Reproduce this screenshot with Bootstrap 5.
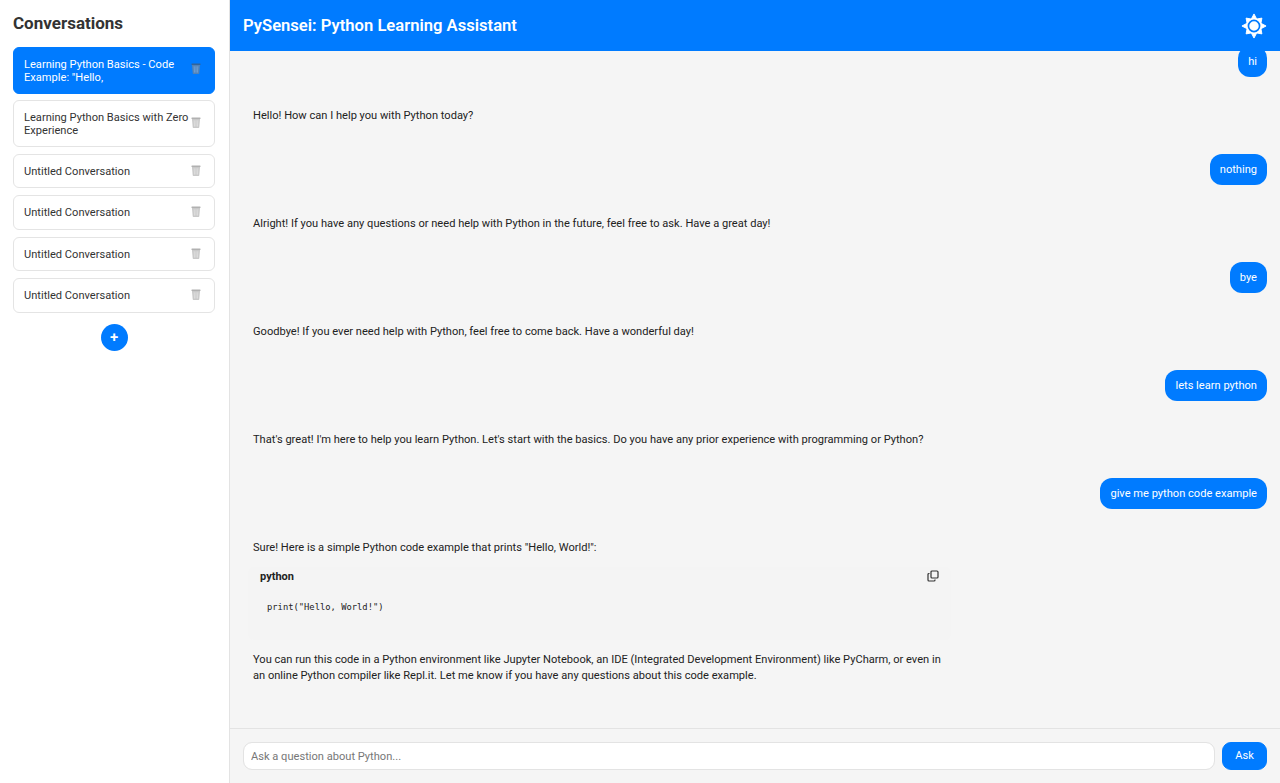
<!DOCTYPE html>
<html lang="en">
<head>
  <meta charset="UTF-8">
  <meta name="viewport" content="width=device-width, initial-scale=1">
  <title>PySensei: Python Learning Assistant</title>
  <link href="https://cdn.jsdelivr.net/npm/bootstrap@5.3.0/dist/css/bootstrap.min.css" rel="stylesheet">
  <style>
    body { font-family: Roboto, "Liberation Sans", sans-serif; font-size: 11.1px; line-height: 16px; color: #222; background: #f5f5f5; overflow: hidden; }
    .side-panel { width: 230px; background: #fff; border-right: 1px solid #e3e3e3; padding: 13px 14px 13px 13px; }
    .side-title { font-size: 17px; line-height: 20px; font-weight: 700; color: #333; margin: 0 0 14px; }
    .convo-list { gap: 6.9px; }
    .convo-item { border: 1px solid #e4e4e4; border-radius: 6px; background: #fff; padding: 9px 10px; min-height: 34.6px; line-height: 13px; color: #333; }
    .convo-item span { padding-top: .5px; }
    .convo-item.active-convo { background: #007bff; border-color: #007bff; color: #fff; }
    .trash-icon { width: 10px; height: 11px; flex: none; margin: 0 3px 2px 2px; opacity: .45; }
    .active-convo .trash-icon { opacity: .6; margin-bottom: 4px; }
    .add-btn { width: 27px; height: 27px; background: #007bff; color: #fff; border: 0; padding: 0; margin-top: 11px; font-size: 15px; font-weight: 600; line-height: 27px; }
    .top-bar { height: 51px; background: #007bff; color: #fff; padding: 0 13px; z-index: 2; flex: none; }
    .top-title { font-size: 16.6px; font-weight: 600; margin: 0; }
    .chat-scroll { min-height: 0; overflow: hidden; padding: 0 13px 44.5px; }
    .user-msg { background: #007bff; color: #fff; border-radius: 12px; padding: 8.5px 10px 6.5px; }
    .bot-msg { padding: 0 324px 0 10px; margin: 31px 0 30px; }
    .bot-msg p { margin: 0; }
    .code-wrap { background: #f4f4f4; margin: 11px -8px 12px -5px; padding: 2px 12px 25px; border-radius: 6px; }
    .code-lang { font-weight: 700; font-size: 11px; }
    .copy-icon { margin-bottom: 2px; }
    .code-line { font-family: "DejaVu Sans Mono", monospace; font-size: 8.8px; margin: 14px 0 0 7px; color: #222; }
    .input-bar { border-top: 1px solid #e3e3e3; padding: 13px; gap: 7px; flex: none; }
    .ask-input { font-size: 11.1px; height: 28px; border-radius: 9px; border-color: #e3e3e3; padding: 0 7px; color: #222; }
    .ask-input::placeholder { color: #777; }
    .ask-btn { background: #007bff; border-color: #007bff; font-size: 11.1px; height: 28px; width: 45px; border-radius: 9px; padding: 0; line-height: 26px; }
  </style>
</head>
<body>

<div class="d-flex vh-100">
  <!-- Sidebar -->
  <aside class="side-panel d-flex flex-column flex-shrink-0">
    <h2 class="side-title">Conversations</h2>
    <div id="convoList" class="convo-list d-flex flex-column"></div>
    <button class="add-btn rounded-circle align-self-center">+</button>
  </aside>

  <!-- Main -->
  <main class="d-flex flex-column flex-grow-1" style="min-width:0">
    <header class="top-bar d-flex align-items-center justify-content-between">
      <h1 class="top-title">PySensei: Python Learning Assistant</h1>
      <svg width="26" height="26" viewBox="0 0 28 28">
        <polygon fill="#fff" stroke="#fff" stroke-width="1" stroke-linejoin="round" points="14,1 16.9,6.5 22.5,5.5 21.5,11.1 27,14 21.5,16.9 22.5,22.5 16.9,21.5 14,27 11.1,21.5 5.5,22.5 6.5,16.9 1,14 6.5,11.1 5.5,5.5 11.1,6.5"/>
        <circle cx="14" cy="14" r="6" fill="#fff" stroke="#007bff" stroke-width="1.8"/>
      </svg>
    </header>

    <div id="chat" class="chat-scroll flex-grow-1 d-flex flex-column justify-content-end">
      <div class="user-msg align-self-end">hi</div>
      <div class="bot-msg"><p>Hello! How can I help you with Python today?</p></div>
      <div class="user-msg align-self-end">nothing</div>
      <div class="bot-msg"><p>Alright! If you have any questions or need help with Python in the future, feel free to ask. Have a great day!</p></div>
      <div class="user-msg align-self-end">bye</div>
      <div class="bot-msg"><p>Goodbye! If you ever need help with Python, feel free to come back. Have a wonderful day!</p></div>
      <div class="user-msg align-self-end">lets learn python</div>
      <div class="bot-msg"><p>That's great! I'm here to help you learn Python. Let's start with the basics. Do you have any prior experience with programming or Python?</p></div>
      <div class="user-msg align-self-end">give me python code example</div>
      <div class="bot-msg mb-0">
        <p>Sure! Here is a simple Python code example that prints "Hello, World!":</p>
        <div class="code-wrap">
          <div class="d-flex justify-content-between align-items-center">
            <span class="code-lang">python</span>
            <svg class="copy-icon" width="12" height="12" viewBox="0 0 12 12" fill="none" stroke="#333" stroke-width="1.2">
              <rect x="4" y="1" width="7" height="7" rx="1"/>
              <path d="M2.5 3.5H2a1 1 0 0 0-1 1V10a1 1 0 0 0 1 1h5a1 1 0 0 0 1-1V9.5"/>
            </svg>
          </div>
          <div class="code-line">print("Hello, World!")</div>
        </div>
        <p>You can run this code in a Python environment like Jupyter Notebook, an IDE (Integrated Development Environment) like PyCharm, or even in an online Python compiler like Repl.it. Let me know if you have any questions about this code example.</p>
      </div>
    </div>

    <div class="input-bar d-flex">
      <input class="form-control ask-input flex-grow-1" type="text" placeholder="Ask a question about Python...">
      <button class="btn btn-primary ask-btn flex-shrink-0">Ask</button>
    </div>
  </main>
</div>

<script>
const convos = [
  'Learning Python Basics - Code Example: "Hello,',
  'Learning Python Basics with Zero Experience',
  'Untitled Conversation',
  'Untitled Conversation',
  'Untitled Conversation',
  'Untitled Conversation'
];
const trash = `<svg class="trash-icon" viewBox="0 0 11 12">
  <path d="M1 1.5h9l-.9 9.8a.8.8 0 0 1-.8.7H2.7a.8.8 0 0 1-.8-.7z" fill="#888"/>
  <rect x=".5" y=".5" width="10" height="1.6" rx=".5" fill="#555"/>
  <path d="M3.5 3.5l.3 7M5.5 3.5v7M7.5 3.5l-.3 7" stroke="#ddd" stroke-width=".6"/>
</svg>`;
const list = document.getElementById('convoList');
convos.forEach((title, i) => {
  const item = document.createElement('div');
  item.className = 'convo-item d-flex align-items-center justify-content-between' + (i === 0 ? ' active-convo' : '');
  item.innerHTML = `<span>${title}</span>${trash}`;
  list.appendChild(item);
});
</script>
<script src="https://cdn.jsdelivr.net/npm/bootstrap@5.3.0/dist/js/bootstrap.bundle.min.js"></script>
</body>
</html>
